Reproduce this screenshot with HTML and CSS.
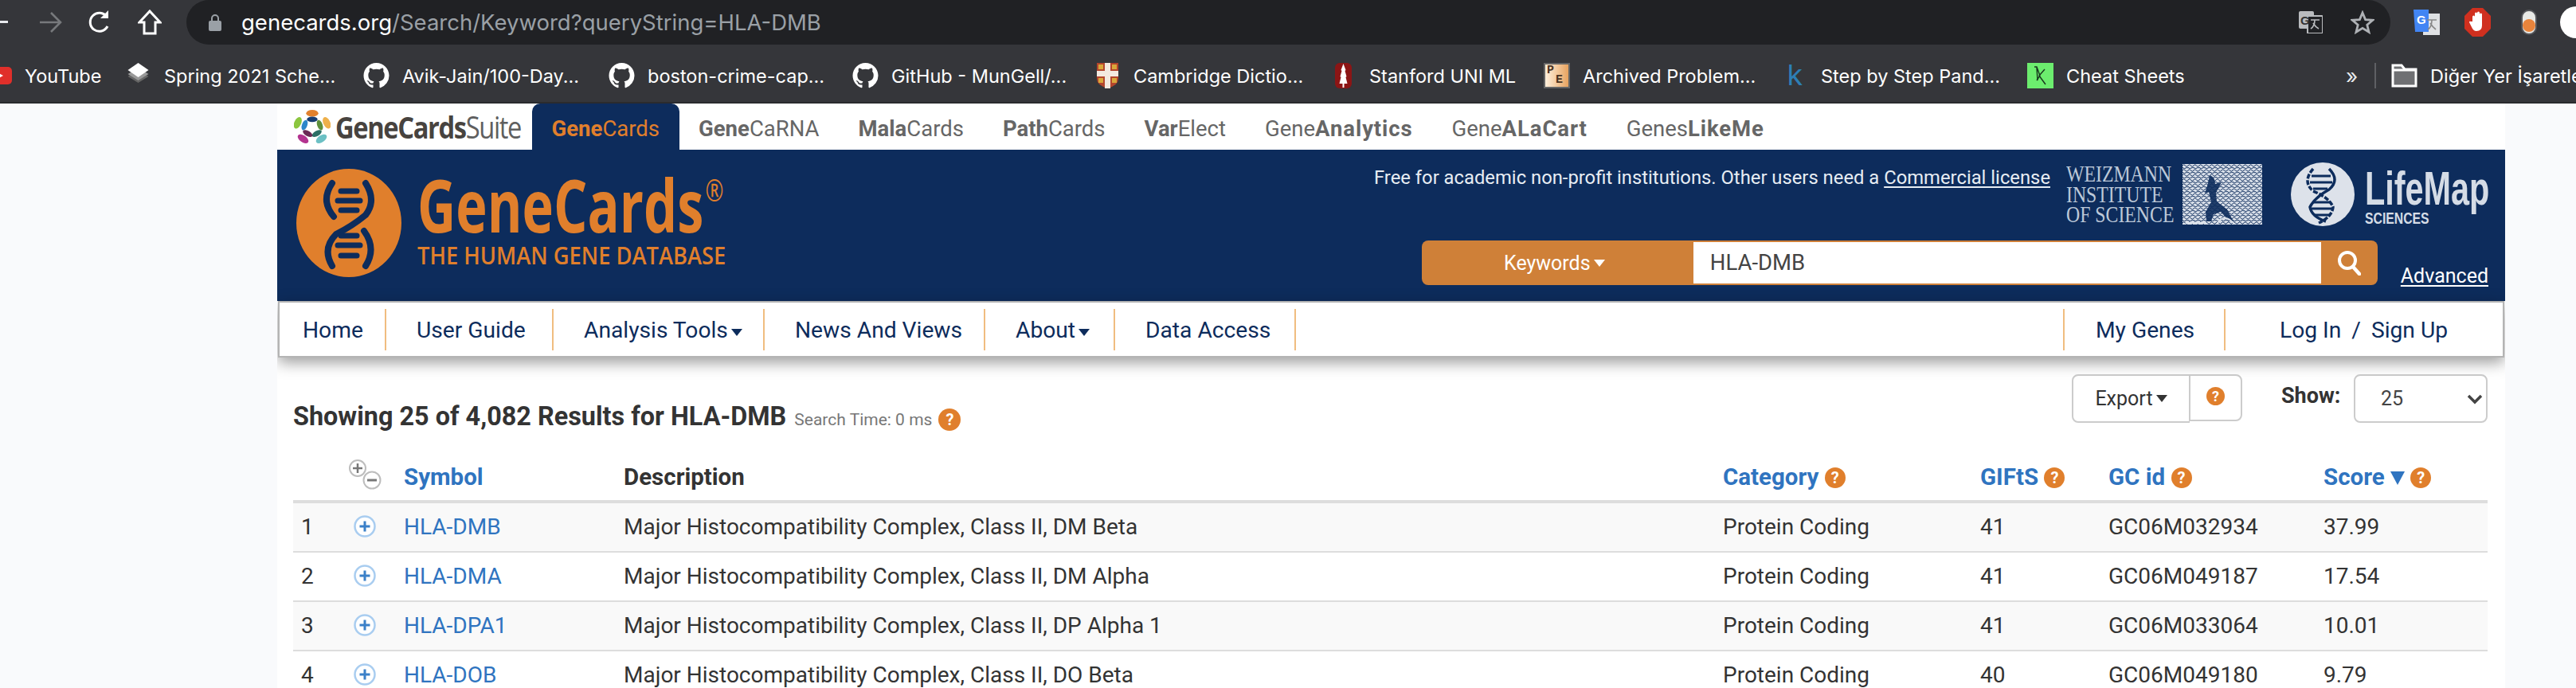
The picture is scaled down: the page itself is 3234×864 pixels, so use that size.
FILE: index.html
```html
<!DOCTYPE html>
<html lang="en">
<head>
<meta charset="utf-8">
<title>GeneCards Search</title>
<link rel="stylesheet" href="styles.css">
</head>
<body>
<svg class="defs" width="0" height="0" aria-hidden="true">
  <symbol id="gh" viewBox="0 0 16 16"><path fill="#fff" d="M8 0C3.58 0 0 3.58 0 8c0 3.54 2.29 6.53 5.47 7.59.4.07.55-.17.55-.38 0-.19-.01-.82-.01-1.49-2.01.37-2.53-.49-2.69-.94-.09-.23-.48-.94-.82-1.13-.28-.15-.68-.52-.01-.53.63-.01 1.08.58 1.23.82.72 1.21 1.87.87 2.33.66.07-.52.28-.87.51-1.07-1.78-.2-3.64-.89-3.64-3.95 0-.87.31-1.59.82-2.15-.08-.2-.36-1.02.08-2.12 0 0 .67-.21 2.2.82.64-.18 1.32-.27 2-.27.68 0 1.36.09 2 .27 1.53-1.04 2.2-.82 2.2-.82.44 1.1.16 1.92.08 2.12.51.56.82 1.27.82 2.15 0 3.07-1.87 3.75-3.65 3.95.29.25.54.73.54 1.48 0 1.07-.01 1.93-.01 2.2 0 .21.15.46.55.38A8.013 8.013 0 0016 8c0-4.42-3.58-8-8-8z"/></symbol>
  <symbol id="plus" viewBox="0 0 28 28"><circle cx="14" cy="14" r="12.500" fill="#fff" stroke="#a9cdf0" stroke-width="2.500"/><path d="M14 7.500v13M7.500 14h13" stroke="#3b80c8" stroke-width="3"/></symbol>
  <pattern id="squig" width="7" height="6" patternUnits="userSpaceOnUse"><path d="M0 2q1.700-2.500 3.500 0t3.500 0M-2 5q2-1.500 3 0t3 0 3 0" fill="none" stroke="#0d2c5c" stroke-width="1"/></pattern>
</svg>

<header class="browser">
  <div class="toolbar-row">
    <svg class="ico-back" viewBox="0 0 10 4"><rect width="10" height="3" fill="#e8eaed"/></svg>
    <svg class="ico-forward" viewBox="0 0 30 30"><path d="M2 15h25M16 3l12 12-12 12" fill="none" stroke="#77797c" stroke-width="2.600"/></svg>
    <svg class="ico-reload" viewBox="0 0 30 32"><path d="M25 21a11.500 11.500 0 1 1-1-12" fill="none" stroke="#fff" stroke-width="3"/><path d="M26 1v10H16z" fill="#fff"/></svg>
    <svg class="ico-home" viewBox="0 0 30 32"><path d="M15 2 2 16h6v14h14V16h6z" fill="none" stroke="#fff" stroke-width="3"/></svg>
    <div class="omnibox">
      <svg class="ico-lock" viewBox="0 0 16 22"><path d="M4 10V6a4 4 0 0 1 8 0v4" fill="none" stroke="#9aa0a6" stroke-width="2"/><rect y="9" width="16" height="13" rx="2" fill="#9aa0a6"/></svg>
      <div class="url"><span class="url-host">genecards.org</span>/Search/Keyword?queryString=HLA-DMB</div>
      <svg class="ico-translate" viewBox="0 0 30 28"><rect width="19" height="22" rx="2" fill="#b9bbbe"/><rect x="11" y="6" width="19" height="22" rx="1" fill="#202124" stroke="#b9bbbe" stroke-width="2"/><text x="2" y="17" class="svg-g">G</text><path d="M15 11h11M20 11q0 8-5 11M18 15q3 5 7 7" fill="none" stroke="#b9bbbe" stroke-width="1.600"/></svg>
      <svg class="ico-star" viewBox="0 0 30 30"><path d="m15 3 3.600 8.600 9.200.7-7 6 2.200 9-8-4.900-8 4.900 2.200-9-7-6 9.200-.7z" fill="none" stroke="#aeb1b5" stroke-width="2.800"/></svg>
    </div>
    <svg class="ext-translate" viewBox="0 0 33 32"><rect x="12" y="5" width="21" height="27" fill="#dfe1e4"/><path d="M0 0h19v28H2z" fill="#4285f4"/><text x="4" y="18" class="svg-g svg-g-white">G</text><path d="M17 13h12M23 13q0 9-5 12M21 17q3 5 7 8" fill="none" stroke="#888" stroke-width="1.600"/></svg>
    <svg class="ext-block" viewBox="0 0 33 36"><path d="M10 0h13l10 10v16L23 36H10L0 26V10z" fill="#d0301f"/><path d="M10 17v-6a1.500 1.500 0 0 1 3 0V7a1.500 1.500 0 0 1 3 0V6a1.500 1.500 0 0 1 3 0v2a1.500 1.500 0 0 1 3 0v14q0 7-7 7-4 0-6-5l-3-6q0-2 2-1z" fill="#fff"/></svg>
    <svg class="ext-capsule" viewBox="0 0 20 32"><rect x="1" y="1" width="18" height="30" rx="9" fill="#e8e9e6" stroke="#55565a" stroke-width="2"/><circle cx="10" cy="20" r="8" fill="#e8843c"/></svg>
    <div class="avatar"></div>
  </div>

  <div class="bookmarks">
    <div class="bm"><svg class="bm-ico" viewBox="0 0 33 22"><rect width="33" height="22" rx="5" fill="#e02f2a"/><path d="m13 6 9 5-9 5z" fill="#fff"/></svg><span>YouTube</span></div>
    <div class="bm"><svg class="bm-ico" viewBox="0 0 33 32"><path d="m16.500 9 13 8-13 8-13-8z" fill="#666"/><path d="m16.500 6 13 8-13 8-13-8z" fill="#999"/><path d="m16.500 0 13 9-13 9-13-9z" fill="#fff"/></svg><span>Spring 2021 Sche...</span></div>
    <div class="bm"><svg class="bm-ico"><use href="#gh"/></svg><span>Avik-Jain/100-Day...</span></div>
    <div class="bm"><svg class="bm-ico"><use href="#gh"/></svg><span>boston-crime-cap...</span></div>
    <div class="bm"><svg class="bm-ico"><use href="#gh"/></svg><span>GitHub - MunGell/...</span></div>
    <div class="bm"><svg class="bm-ico" viewBox="0 0 33 32"><path d="M3 0h27v20q0 8-13.500 12Q3 28 3 20z" fill="#b3452c"/><path d="M13 0h7v32h-7zM3 10h27v7H3z" fill="#f3e9df"/><path d="M5 2h6v6H5zm17 0h6v6h-6zM5 19h6v6H5zm17 0h6v6h-6z" fill="#d9a83b"/></svg><span>Cambridge Dictio...</span></div>
    <div class="bm"><svg class="bm-ico" viewBox="0 0 33 32"><rect x="6" width="21" height="32" rx="6" fill="#8c1515"/><path d="M16.500 1l3 8-1 1 2 7-1 1 2 8h-4v5h-2v-5h-4l2-8-1-1 2-7-1-1z" fill="#fff"/></svg><span>Stanford UNI ML</span></div>
    <div class="bm"><div class="pe-ico"><span class="pe-p">P</span><span class="pe-e">E</span></div><span>Archived Problem...</span></div>
    <div class="bm"><div class="k-ico">k</div><span>Step by Step Pand...</span></div>
    <div class="bm"><svg class="bm-ico" viewBox="0 0 33 32"><rect width="33" height="32" fill="#6ced6e"/><path d="M9 5h3l4 11-4 6M12 6l1 16M22 8l-7 8 8 11" fill="none" stroke="#17351d" stroke-width="1.400"/></svg><span>Cheat Sheets</span></div>
    <div class="bm-more">»</div>
    <div class="bm-other"><svg class="bm-ico" viewBox="0 0 33 30"><path d="M2 2h11l4 5h14v21H2z" fill="#6f7073" stroke="#fff" stroke-width="3"/><path d="M2 8h29" stroke="#fff" stroke-width="3"/></svg><span>Diğer Yer İşaretleri</span></div>
  </div>
</header>

<main class="page">
  <nav class="suite">
    <a class="suite-logo">
      <svg class="flower" viewBox="0 0 48 44">
        <ellipse cx="24" cy="4.500" rx="8" ry="4.500" fill="#e2812e"/>
        <ellipse cx="43" cy="17" rx="4.500" ry="8" fill="#eeb04a" transform="rotate(-25 43 17)"/>
        <ellipse cx="36" cy="38" rx="8" ry="4.500" fill="#6cc0c4" transform="rotate(-35 36 38)"/>
        <ellipse cx="12" cy="38" rx="8" ry="4.500" fill="#b3338f" transform="rotate(35 12 38)"/>
        <ellipse cx="5" cy="17" rx="4.500" ry="8" fill="#8cc63f" transform="rotate(25 5 17)"/>
        <ellipse cx="24" cy="12.500" rx="7" ry="3.500" fill="#173d73"/>
        <ellipse cx="34" cy="20" rx="3.500" ry="7" fill="#5d8f3c" transform="rotate(-20 34 20)"/>
        <ellipse cx="30" cy="31" rx="7" ry="3.500" fill="#2c6f66" transform="rotate(-30 30 31)"/>
        <ellipse cx="18" cy="31" rx="7" ry="3.500" fill="#6b2a55" transform="rotate(30 18 31)"/>
        <ellipse cx="14" cy="20" rx="3.500" ry="7" fill="#2c86c9" transform="rotate(20 14 20)"/>
      </svg>
      <span class="suite-text"><b>GeneCards</b>Suite</span>
    </a>
    <a class="tab tab-active"><b>Gene</b>Cards</a>
    <a class="tab"><b>Gene</b>CaRNA</a>
    <a class="tab"><b>Mala</b>Cards</a>
    <a class="tab"><b>Path</b>Cards</a>
    <a class="tab"><b>Var</b>Elect</a>
    <a class="tab tab-tail">Gene<b>Analytics</b></a>
    <a class="tab tab-tail">Gene<b>ALaCart</b></a>
    <a class="tab tab-tail">Genes<b>LikeMe</b></a>
  </nav>

  <section class="banner">
    <div class="logo">
      <svg class="logo-mark" viewBox="0 0 132 136">
        <ellipse cx="66" cy="68" rx="66" ry="68" fill="#e07f2c"/>
        <g fill="none" stroke="#0d2c5c" stroke-linecap="round">
          <path d="M45 18Q30 40 47 60M87 18q14 22 0 40Q70 72 50 82q-18 18-5 40M85 78q16 22 2 44" stroke-width="8"/>
          <path d="M56 28h20M52 40h28M56 52h20M56 84h20M52 96h28M56 109h20" stroke-width="7"/>
        </g>
      </svg>
      <div class="logo-words">
        <div class="logo-title">GeneCards<sup class="logo-reg">®</sup></div>
        <div class="logo-sub">THE HUMAN GENE DATABASE</div>
      </div>
    </div>
    <div class="banner-right">
      <div class="partners">
        <p class="free">Free for academic non-profit institutions. Other users need a <a class="u">Commercial license</a></p>
        <div class="weizmann">
          <div class="wz-text"><span>WEIZMANN</span><span>INSTITUTE</span><span>OF SCIENCE</span></div>
          <svg class="wz-art" viewBox="0 0 100 76"><rect width="100" height="76" fill="#dbe1ea"/><rect width="100" height="76" fill="url(#squig)"/><path d="M34 14q7 2 7 11l8-2-7 13 1 11 13 10 8 15h-5L48 60l-9 3-3 9h-6l-1-12 7-12-3-13-5 2 4-13z" fill="#0d2c5c" opacity=".9"/><path d="M4 74h26M44 74q8-12 20 0" fill="none" stroke="#dbe1ea" stroke-width="2"/></svg>
        </div>
        <div class="lifemap">
          <svg class="lm-mark" viewBox="0 0 80 80">
            <circle cx="40" cy="40" r="40" fill="#dde2ea"/>
            <g fill="none" stroke="#0d2c5c">
              <path d="M28 8Q14 24 28 36q20 8 25 20-1 12-18 20" stroke-width="3.500" stroke-dasharray="6 2"/>
              <path d="M48 8q14 14 0 26Q30 44 24 56q2 12 20 18" stroke-width="3.500"/>
              <path d="M26 17h24M24 25h28M28 33h18M28 50h22M26 58h28M30 66h20" stroke-width="3"/>
            </g>
          </svg>
          <div class="lm-words"><div class="lm-name">LifeMap</div><div class="lm-sub">SCIENCES</div></div>
        </div>
      </div>
      <div class="search-row">
        <div class="search">
          <div class="search-type">Keywords<i class="caret caret-white"></i></div>
          <div class="search-input">HLA-DMB</div>
          <div class="search-go"><svg viewBox="0 0 30 32"><circle cx="13" cy="13" r="10" fill="none" stroke="#fff" stroke-width="4"/><path d="m20 21 8 9" stroke="#fff" stroke-width="4.500" stroke-linecap="round"/></svg></div>
        </div>
        <a class="advanced u">Advanced</a>
      </div>
    </div>
  </section>

  <nav class="menu">
    <a class="menu-item menu-first">Home</a>
    <a class="menu-item">User Guide</a>
    <a class="menu-item">Analysis Tools<i class="caret caret-navy"></i></a>
    <a class="menu-item">News And Views</a>
    <a class="menu-item">About<i class="caret caret-navy"></i></a>
    <a class="menu-item">Data Access</a>
    <span class="menu-spacer"></span>
    <a class="menu-item menu-genes">My Genes</a>
    <div class="menu-auth"><a>Log In</a><span class="menu-slash">/</span><a>Sign Up</a></div>
  </nav>

  <section class="results">
    <div class="results-bar">
      <h1 class="results-title">Showing 25 of 4,082 Results for HLA-DMB <small class="search-time">Search Time: 0 ms</small><span class="help help-title">?</span></h1>
      <div class="results-tools">
        <div class="export">
          <div class="export-btn">Export<i class="caret caret-dark"></i></div>
          <div class="export-help"><span class="help help-small">?</span></div>
        </div>
        <span class="show-label">Show:</span>
        <div class="show-select"><span>25</span><svg viewBox="0 0 20 14"><path d="m2 3 8 8 8-8" fill="none" stroke="#444" stroke-width="3.500"/></svg></div>
      </div>
    </div>

    <table class="genes">
      <colgroup>
        <col class="c-num"><col class="c-exp"><col class="c-sym"><col class="c-desc"><col class="c-cat"><col class="c-gifts"><col class="c-gc"><col class="c-score">
      </colgroup>
      <thead>
        <tr>
          <th></th>
          <th><svg class="expand-all" viewBox="0 0 42 38"><circle cx="12" cy="11" r="10" fill="#fff" stroke="#bdbdbd" stroke-width="2"/><path d="M12 5v12M6 11h12" stroke="#777" stroke-width="2.500"/><circle cx="30" cy="26" r="10.500" fill="#fff" stroke="#bdbdbd" stroke-width="2"/><path d="M24 26h12" stroke="#777" stroke-width="3"/></svg></th>
          <th class="link">Symbol</th>
          <th>Description</th>
          <th class="link">Category <span class="help">?</span></th>
          <th class="link">GIFtS <span class="help">?</span></th>
          <th class="link">GC id <span class="help">?</span></th>
          <th class="link">Score <i class="sort"></i> <span class="help">?</span></th>
        </tr>
      </thead>
      <tbody>
        <tr><td>1</td><td><svg class="expand"><use href="#plus"/></svg></td><td class="link">HLA-DMB</td><td>Major Histocompatibility Complex, Class II, DM Beta</td><td>Protein Coding</td><td>41</td><td>GC06M032934</td><td>37.99</td></tr>
        <tr><td>2</td><td><svg class="expand"><use href="#plus"/></svg></td><td class="link">HLA-DMA</td><td>Major Histocompatibility Complex, Class II, DM Alpha</td><td>Protein Coding</td><td>41</td><td>GC06M049187</td><td>17.54</td></tr>
        <tr><td>3</td><td><svg class="expand"><use href="#plus"/></svg></td><td class="link">HLA-DPA1</td><td>Major Histocompatibility Complex, Class II, DP Alpha 1</td><td>Protein Coding</td><td>41</td><td>GC06M033064</td><td>10.01</td></tr>
        <tr><td>4</td><td><svg class="expand"><use href="#plus"/></svg></td><td class="link">HLA-DOB</td><td>Major Histocompatibility Complex, Class II, DO Beta</td><td>Protein Coding</td><td>40</td><td>GC06M049180</td><td>9.79</td></tr>
      </tbody>
    </table>
  </section>
</main>
</body>
</html>
```
FILE: styles.css
```css
* { box-sizing: border-box; }
html, body { margin: 0; height: 864px; overflow: hidden; }
body { background: #f9fafc; font-family: Roboto, "Liberation Sans", sans-serif; color: #333; }
a { color: inherit; text-decoration: none; }
.defs { position: absolute; }
.u { text-decoration: underline; text-underline-offset: 3px; }

/* browser chrome */
.browser { height: 130px; background: #35363a; border-bottom: 2px solid #2a2b2e; font-family: Inter, "Liberation Sans", sans-serif; overflow: hidden; }
.toolbar-row { height: 56px; display: flex; align-items: center; }
.toolbar-row > * { flex: none; }
.ico-back { width: 10px; height: 4px; }
.ico-forward { width: 30px; height: 30px; margin-left: 38px; }
.ico-reload { width: 30px; height: 32px; margin-left: 32px; }
.ico-home { width: 30px; height: 32px; margin-left: 33px; }
.omnibox { width: 2767px; height: 56px; margin-left: 31px; background: #202124; border-radius: 28px; display: flex; align-items: center; padding: 0 20px 0 28px; }
.ico-lock { width: 16px; height: 22px; }
.url { margin-left: 25px; font-size: 27.500px; color: #9aa0a6; flex: 1; white-space: nowrap; }
.url-host { color: #fff; }
.ico-translate { width: 30px; height: 28px; }
.ico-star { width: 30px; height: 30px; margin-left: 35px; }
.svg-g { font: bold 15px "Liberation Sans", sans-serif; fill: #333; }
.svg-g-white { fill: #fff; }
.ext-translate { width: 33px; height: 32px; margin-left: 29px; }
.ext-block { width: 33px; height: 36px; margin-left: 31px; }
.ext-capsule { width: 20px; height: 32px; margin-left: 38px; }
.avatar { width: 40px; height: 40px; border-radius: 50%; background: #fff; margin-left: 29px; }
.bookmarks { height: 72px; margin-left: -18px; display: grid; grid-template-columns: 175px 299px 308px 306px 304px 296px 268px 299px 308px 390px 46px 300px; align-items: center; padding-top: 6px; }
.bm, .bm-other { display: flex; align-items: center; gap: 16px; color: #fff; font-size: 23.500px; white-space: nowrap; }
.bm-ico { width: 33px; height: 32px; flex: none; }
.bm:first-child .bm-ico { height: 22px; }
.bm-more { color: #e8eaed; font-size: 26px; padding-left: 10px; }
.bm-other { height: 32px; border-left: 2px solid #5f6064; padding-left: 19px; }
.pe-ico { width: 33px; height: 32px; flex: none; background: linear-gradient(90deg, #fff0dc, #e8a35f); border: 2px solid #666; font: bold 15px/1 "Liberation Mono", monospace; color: #4a3322; position: relative; }
.pe-p { position: absolute; left: 2px; top: 0; }
.pe-e { position: absolute; left: 13px; top: 12px; }
.k-ico { width: 33px; height: 32px; flex: none; color: #2d7fb5; font-size: 36px; line-height: 30px; text-align: center; }

/* page */
.page { width: 2797px; height: 734px; margin-left: 348px; background: #fff; overflow: hidden; }
.suite { height: 58px; display: flex; font-size: 27.500px; color: #666; }
.suite-logo { width: 320px; flex: none; display: flex; align-items: center; padding: 0 0 0 21px; gap: 6px; }
.flower { width: 46px; height: 44px; flex: none; }
.suite-text { width: 215px; font: 400 38px/44px "Open Sans", sans-serif; letter-spacing: -1.600px; color: #5f5f5f; white-space: nowrap; transform: scaleX(.86); transform-origin: left center; }
.suite-text b { color: #47433f; font-weight: 700; }
.tab { display: flex; align-items: center; padding: 5px 24.500px 0; white-space: nowrap; }
.tab b { font-weight: 700; }
.tab-tail b { letter-spacing: .9px; }
.tab-active { background: #0d2c5c; color: #e07f2c; border-radius: 10px 10px 0 0; }

.banner { height: 190px; background: #0d2c5c; display: flex; justify-content: space-between; padding: 16px 21px 0 24px; color: #fff; }
.logo { display: flex; align-items: flex-start; gap: 20px; padding-top: 8px; }
.logo-mark { width: 132px; height: 136px; flex: none; }
.logo-words { color: #e07f2c; font-family: "Open Sans", sans-serif; width: 388px; padding-top: 6px; }
.logo-title { font-size: 92px; line-height: 78px; font-weight: 700; white-space: nowrap; transform: scaleX(.725); transform-origin: left top; }
.logo-reg { font-size: 38px; font-weight: 400; vertical-align: top; line-height: 40px; margin-left: 3px; }
.logo-sub { font-size: 30px; line-height: 30px; font-weight: 600; white-space: nowrap; margin-top: 10px; transform: scaleX(.91); transform-origin: left top; }
.banner-right { display: flex; flex-direction: column; align-items: flex-end; gap: 18px; }
.partners { display: flex; height: 80px; align-items: flex-start; }
.free { margin: 2px 0 0; font-size: 23.800px; line-height: 34px; white-space: nowrap; color: #e7edf3; }
.weizmann { display: flex; gap: 10px; margin: 2px 0 0 20px; width: 246px; }
.wz-text { width: 136px; font: 400 29px/25.500px "Liberation Serif", serif; color: #bcc8d8; display: flex; flex-direction: column; }
.wz-text span { transform: scaleX(.82); transform-origin: left center; white-space: nowrap; }
.wz-art { width: 100px; height: 76px; flex: none; }
.lifemap { display: flex; gap: 13px; margin-left: 36px; width: 248px; }
.lm-mark { width: 80px; height: 80px; flex: none; }
.lm-words { color: #d5dce6; padding-top: 5px; font-family: "Liberation Sans", sans-serif; font-weight: 700; }
.lm-name { font-size: 60px; line-height: 56px; white-space: nowrap; transform: scaleX(.69); transform-origin: left center; }
.lm-sub { font-size: 21px; line-height: 18px; white-space: nowrap; transform: scaleX(.75); transform-origin: left center; }
.search-row { display: flex; align-items: flex-end; gap: 29px; }
.search { width: 1200px; height: 56px; display: flex; background: #cf8038; border-radius: 8px; padding: 2px 0; }
.search-type { width: 341px; display: flex; align-items: center; justify-content: center; font-size: 25px; color: #fff; padding-right: 8px; }
.search-input { width: 788px; background: #fff; color: #444; font-size: 27.500px; line-height: 52px; padding-left: 21px; }
.search-go { flex: 1; display: flex; align-items: center; justify-content: center; }
.search-go svg { width: 30px; height: 32px; }
.advanced { font-size: 25px; line-height: 28px; color: #fff; text-decoration-thickness: 2px; margin-bottom: -3px; }

.caret { display: inline-block; width: 0; height: 0; border-style: solid; border-width: 9px 7px 0; border-color: transparent; margin-left: 4px; vertical-align: 2px; }
.caret-white { border-top-color: #fff; }
.caret-navy { border-top-color: #0d2c5c; }
.caret-dark { border-top-color: #333; }

.menu { height: 71px; width: 2795px; margin-left: 1px; background: #fff; border: 2px solid #b4b4b4; box-shadow: 0 6px 18px rgba(0, 0, 0, .4); display: grid; grid-template-columns: 134px 210px 265px 277px 163px 227px 1fr 204px 348px; align-items: center; color: #0d2c5c; font-size: 28.200px; position: relative; }
.menu-item { height: 52px; line-height: 54px; border-right: 2px solid #f0bd80; padding-left: 38px; white-space: nowrap; }
.menu-first { padding-left: 29px; }
.menu-genes { border-left: 2px solid #f0bd80; padding-left: 39px; }
.menu-auth { height: 52px; line-height: 54px; display: flex; padding-left: 68px; white-space: nowrap; }
.menu-slash { margin: 0 13px; }

.results { padding: 21px 22px 0 20px; }
.results-bar { height: 100px; display: flex; justify-content: space-between; align-items: flex-start; }
.results-title { margin: 33px 0 0; font-size: 32.400px; line-height: 40px; font-weight: 700; color: #333; white-space: nowrap; }
.search-time { font-size: 21px; font-weight: 400; color: #777; margin-left: 2px; }
.help { display: inline-block; width: 26px; height: 26px; border-radius: 50%; background: #e07f2c; color: #fff; font: 700 20px/26px Roboto, sans-serif; text-align: center; vertical-align: 2px; }
.help-title { width: 28px; height: 28px; line-height: 28px; margin-left: 8px; vertical-align: 0; }
.help-small { width: 23px; height: 23px; font-size: 18px; line-height: 23px; }
.results-tools { display: flex; align-items: flex-start; }
.export { display: flex; color: #333; font-size: 25px; }
.export-btn { width: 148px; height: 61px; border: 2px solid #ccc; border-right-width: 1px; border-radius: 8px 0 0 8px; display: flex; align-items: center; justify-content: center; }
.export-help { width: 66px; height: 59px; border: 2px solid #ccc; border-left-width: 1px; border-radius: 0 8px 8px 0; display: flex; align-items: center; justify-content: center; padding-bottom: 4px; }
.show-label { margin-left: 49px; font-size: 27px; line-height: 54px; font-weight: 700; width: 91px; }
.show-select { width: 168px; height: 61px; border: 2px solid #ccc; border-radius: 8px; display: flex; align-items: center; justify-content: space-between; padding: 0 4px 0 32px; font-size: 25px; color: #444; }
.show-select svg { width: 20px; height: 14px; }

.genes { width: 2755px; border-collapse: separate; border-spacing: 0; table-layout: fixed; font-size: 28px; color: #333; }
.c-num { width: 72px; } .c-exp { width: 57px; } .c-sym { width: 276px; } .c-desc { width: 1380px; }
.c-cat { width: 323px; } .c-gifts { width: 161px; } .c-gc { width: 270px; } .c-score { width: 216px; }
.genes th { height: 62px; padding: 0 0 0 10px; border-bottom: 4px solid #ddd; text-align: left; font-size: 29.500px; font-weight: 700; white-space: nowrap; }
.genes td { height: 62px; padding: 0 0 2px 10px; border-bottom: 2px solid #ddd; white-space: nowrap; }
.genes tbody tr:nth-child(odd) td { background: #f9f9f9; }
.genes .link { color: #2f74c0; }
.expand { width: 28px; height: 28px; display: block; }
.genes td:nth-child(2) { padding-left: 4px; }
.genes th:nth-child(2) { padding-left: 0; }
.expand-all { width: 42px; height: 38px; display: block; margin-bottom: 6px; margin-left: -3px; }
.sort { display: inline-block; width: 0; height: 0; border-style: solid; border-width: 17px 9px 0; border-color: #2f74c0 transparent transparent; }
```
